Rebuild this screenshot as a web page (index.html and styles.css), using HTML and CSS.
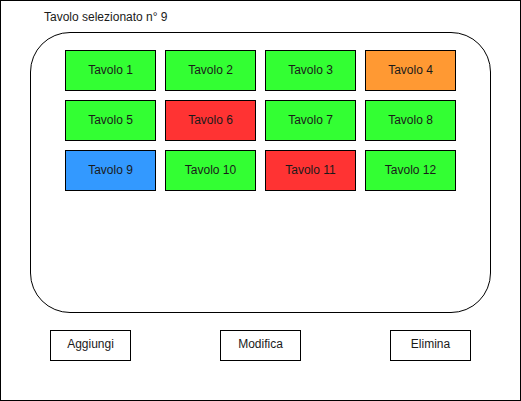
FILE: index.html
```html
<!DOCTYPE html>
<html lang="it">
<head>
  <meta charset="UTF-8">
  <title>Gestione Tavoli</title>
  <link rel="stylesheet" href="styles.css">
</head>
<body>
  <div class="frame">
    <div class="title">Tavolo selezionato n° 9</div>

    <div class="panel">
      <div class="grid">
        <div class="table free">Tavolo 1</div>
        <div class="table free">Tavolo 2</div>
        <div class="table free">Tavolo 3</div>
        <div class="table waiting">Tavolo 4</div>
        <div class="table free">Tavolo 5</div>
        <div class="table busy">Tavolo 6</div>
        <div class="table free">Tavolo 7</div>
        <div class="table free">Tavolo 8</div>
        <div class="table selected">Tavolo 9</div>
        <div class="table free">Tavolo 10</div>
        <div class="table busy">Tavolo 11</div>
        <div class="table free">Tavolo 12</div>
      </div>
    </div>

    <div class="actions">
      <div class="btn">Aggiungi</div>
      <div class="btn">Modifica</div>
      <div class="btn">Elimina</div>
    </div>
  </div>
</body>
</html>
```

FILE: styles.css
```css
/* Page */
body {
  margin: 0;
  font-family: "Liberation Sans", Arial, sans-serif;
  font-size: 12px;
  color: #1a1a1a;
  background: #fff;
}

.frame {
  width: 521px;
  height: 401px;
  box-sizing: border-box;
  border: 1px solid #000;
  display: flex;
  flex-direction: column;
}

.title {
  margin: 9px 0 0 43px;
  line-height: 14px;
}

/* Tables area */
.panel {
  width: 461px;
  height: 281px;
  box-sizing: border-box;
  margin: 8px 0 0 29px;
  border: 1px solid #000;
  border-radius: 40px;
  padding: 17px 0 0 34px;
}

.grid {
  display: grid;
  grid-template-columns: repeat(4, 91px);
  grid-auto-rows: 41px;
  gap: 9px;
}

.table {
  box-sizing: border-box;
  border: 1px solid #000;
  padding-bottom: 1px;
  display: flex;
  align-items: center;
  justify-content: center;
}

.free { background: #33ff33; }
.busy { background: #ff3333; }
.waiting { background: #ff9933; }
.selected { background: #3399ff; }

/* Buttons */
.actions {
  display: flex;
  gap: 89px;
  margin: 17px 0 0 49px;
}

.btn {
  width: 81px;
  height: 31px;
  box-sizing: border-box;
  border: 1px solid #000;
  padding-bottom: 4px;
  display: flex;
  align-items: center;
  justify-content: center;
}
```
